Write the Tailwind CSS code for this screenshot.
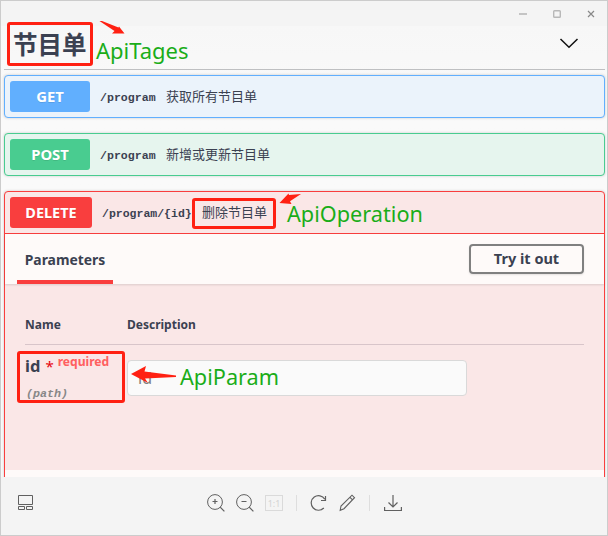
<!DOCTYPE html>
<html lang="zh">
<head>
<meta charset="utf-8">
<title>节目单</title>
<script src="https://cdn.jsdelivr.net/npm/@tailwindcss/browser@4"></script>
</head>
<body class="bg-black">
<div class="relative flex h-[536px] w-[608px] flex-col overflow-hidden border border-[#cccccc] bg-[#f4f4f4] font-['Noto_Sans','Noto_Sans_CJK_SC',sans-serif] text-[#3b4151]">
  <header class="flex h-[25px] shrink-0 items-center justify-end gap-[26px] pr-[12px]">
    <svg class="h-2 w-2" viewBox="0 0 8 8"><path d="M0 4h8" stroke="#c4c4c4" stroke-width="2"/></svg>
    <svg class="h-2 w-2" viewBox="0 0 8 8"><rect x=".7" y=".7" width="6.600" height="6.600" rx=".8" fill="none" stroke="#b8b8b8" stroke-width="1.400"/></svg>
    <svg class="h-2 w-2" viewBox="0 0 8 8"><path d="M1 1l6 6M7 1l-6 6" stroke="#888" stroke-width="1.200"/></svg>
  </header>

  <main class="flex h-[451px] shrink-0 flex-col overflow-hidden bg-gradient-to-b from-[#f7f7f7] to-[#fafafa] to-20% pl-[3px] pr-[2px]">
    <div class="flex h-[44px] shrink-0 items-center justify-between border-b border-[#bfc0c2] pl-[9px] pr-[26px]">
      <h1 class="mt-[-4px] text-[24.5px] leading-none font-bold whitespace-nowrap">节目单</h1>
      <svg class="mt-[-9px] h-3 w-5" viewBox="0 0 20 12" fill="none" stroke="#111" stroke-width="1.500"><path d="M1.500 2L10 10.200 18.500 2"/></svg>
    </div>

    <section class="mt-[5px] flex h-[43px] shrink-0 items-center rounded-[4px] border border-[#61affe] bg-[#ebf3fb] pl-[5px] shadow-[0_0_3px_rgba(0,0,0,0.19)]">
      <span class="flex h-[31px] w-[80px] items-center justify-center rounded-[3px] bg-[#61affe] text-[14.8px] font-bold text-white [text-shadow:0_1px_0_rgba(0,0,0,0.1)]">GET</span>
      <span class="ml-[10px] w-[56px] pt-[3px] font-['Liberation_Mono',monospace] text-[11.6px] font-bold">/program</span>
      <span class="ml-[10px] pt-px text-[13px]">获取所有节目单</span>
    </section>

    <section class="mt-[15px] flex h-[43px] shrink-0 items-center rounded-[4px] border border-[#49cc90] bg-[#e6f5ee] pl-[5px] shadow-[0_0_3px_rgba(0,0,0,0.19)]">
      <span class="flex h-[31px] w-[80px] items-center justify-center rounded-[3px] bg-[#49cc90] text-[14.8px] font-bold text-white [text-shadow:0_1px_0_rgba(0,0,0,0.1)]">POST</span>
      <span class="ml-[10px] w-[56px] pt-[3px] font-['Liberation_Mono',monospace] text-[11.6px] font-bold">/program</span>
      <span class="ml-[10px] pt-px text-[13px]">新增或更新节目单</span>
    </section>

    <section class="mt-[15px] flex h-[310px] shrink-0 flex-col rounded-t-[4px] border border-[#f93e3e] bg-[#fae7e7] shadow-[0_0_3px_rgba(0,0,0,0.19)]">
      <div class="flex h-[42px] shrink-0 items-center border-b border-[#f93e3e] pl-[5px]">
        <span class="flex h-[31px] w-[82px] items-center justify-center rounded-[3px] bg-[#f93e3e] text-[14.5px] font-bold text-white [text-shadow:0_1px_0_rgba(0,0,0,0.1)]">DELETE</span>
        <span class="ml-[10px] w-[90px] pt-[3px] font-['Liberation_Mono',monospace] text-[11.500px] font-bold">/program/{id}</span>
        <span class="ml-[10px] pt-px text-[13px]">删除节目单</span>
      </div>
      <div class="z-0 flex h-[50px] shrink-0 items-center justify-between bg-[#fefaf9] pr-[20px] pl-[12px] shadow-[0_1px_2px_rgba(0,0,0,0.12)]">
        <h4 class="flex h-full w-[96px] items-center justify-center border-b-4 border-[#f93e3e] pt-[6px] text-[13.9px] font-bold">Parameters</h4>
        <button class="flex h-[30px] w-[115px] items-center justify-center rounded-[4px] border-2 border-[#808080] text-[14.5px] font-bold shadow-[0_1px_2px_rgba(0,0,0,0.1)]">Try it out</button>
      </div>
      <div class="h-[186px] shrink-0 px-[20px] pt-[20px]">
        <div class="flex h-[41px] items-center border-b border-[#d8c5ca] pt-[2px] text-[12px] font-bold">
          <span class="w-[102px]">Name</span><span>Description</span>
        </div>
        <div class="flex">
          <div class="w-[102px] pt-[10px]">
            <div class="flex h-[22px] items-center leading-none font-bold"><span class="text-[16.5px]">id</span><span class="ml-[5px] text-[15px] font-normal text-red-600">*</span><span class="mt-[-7px] ml-[4px] text-[12.1px] text-[#ff6060]">required</span></div>
            <div class="mt-[10px] pl-px font-['Liberation_Mono',monospace] text-[11.67px] leading-[14px] font-bold text-[#888] italic">(path)</div>
          </div>
          <div class="mt-[15px] flex h-[36px] w-[340px] items-center rounded-[4px] border border-[#d9d9d9] bg-[#fafafa] pl-[10px] text-[16px] text-[#808080]">id</div>
        </div>
      </div>
      <div class="grow bg-[#fefaf9]"></div>
    </section>
  </main>

  <footer class="flex grow items-center pb-[6px] pl-[17px] text-[#606060]">
    <svg class="h-4 w-4" viewBox="0 0 16 16" fill="none" stroke="currentColor"><path d="M.5.5h14v9H.5zM.5 11.500h6v3h-6zM8.500 11.500h6v3h-6z"/></svg>
    <svg class="ml-[173px] h-[18px] w-[18px]" viewBox="0 0 18 18" fill="none" stroke="currentColor"><circle cx="8" cy="8" r="7.400"/><path d="M5.500 7.500h5M8 5v5M13.200 13.200l4.200 4.200" stroke-width="1.200"/></svg>
    <svg class="ml-[11px] h-[18px] w-[18px]" viewBox="0 0 18 18" fill="none" stroke="currentColor"><circle cx="8" cy="8" r="7.400"/><path d="M5.500 7.500h5M13.200 13.200l4.200 4.200" stroke-width="1.200"/></svg>
    <span class="ml-[11px] flex h-[16px] w-[18px] items-center justify-center border border-[#dadada] text-[9px] leading-none text-[#d3d3d3]">1:1</span>
    <span class="ml-[13px] h-4 w-px bg-[#dedede]"></span>
    <svg class="ml-[13px] h-[18px] w-[18px]" viewBox="0 0 18 18" fill="none" stroke="currentColor" stroke-width="1.200"><path d="M13.800 14A7.300 7.300 0 1 1 14.800 5.200M15.500 2v4.500H11"/></svg>
    <svg class="ml-[11px] h-[18px] w-[18px]" viewBox="0 0 18 18" fill="none" stroke="currentColor" stroke-width="1.100"><path d="M1.200 16.300l.8-4.300L13 1.200l2.500 2.500L5 14.700zM11 3.300l2.500 2.500"/></svg>
    <span class="ml-[12px] h-4 w-px bg-[#dedede]"></span>
    <svg class="ml-[14px] h-[18px] w-[18px]" viewBox="0 0 18 18" fill="none" stroke="currentColor" stroke-width="1.200"><path d="M9 1v12M4.500 8.500L9 13l4.500-4.500M.6 13v3.500h16.800V13"/></svg>
  </footer>

  <!-- annotations over the page -->
  <div class="absolute top-[21px] left-[6px] h-[44px] w-[86px] rounded-[3px] border-3 border-[#ff2012]"></div>
  <div class="absolute top-[197px] left-[191px] h-[31px] w-[84px] rounded-[3px] border-3 border-[#ff2012]"></div>
  <div class="absolute top-[350px] left-[16px] h-[52px] w-[108px] rounded-[3px] border-3 border-[#ff2012]"></div>
  <svg class="absolute top-[-1px] left-[-1px] h-[536px] w-[608px]" viewBox="0 0 608 536" fill="#ff2012">
    <path d="M99.500 21L102 21 118.500 27.500 119 26.500 124.500 33.500 112 33.500 114.500 31z"/>
    <path d="M301 194L289 195 288.500 193.500 279.500 203 291.500 204 290 201.200z"/>
    <path d="M131 374L146 366 144.500 371.500 176 375.500 176 377 145 378.500 148 383z"/>
  </svg>
  <span class="absolute top-[34px] left-[95px] text-[22px] leading-[30px] text-[#1aad19]">ApiTages</span>
  <span class="absolute top-[198px] left-[286px] text-[21.700px] leading-[30px] text-[#1aad19]">ApiOperation</span>
  <span class="absolute top-[361px] left-[179px] text-[21.700px] leading-[30px] text-[#1aad19]">ApiParam</span>
</div>
</body>
</html>
